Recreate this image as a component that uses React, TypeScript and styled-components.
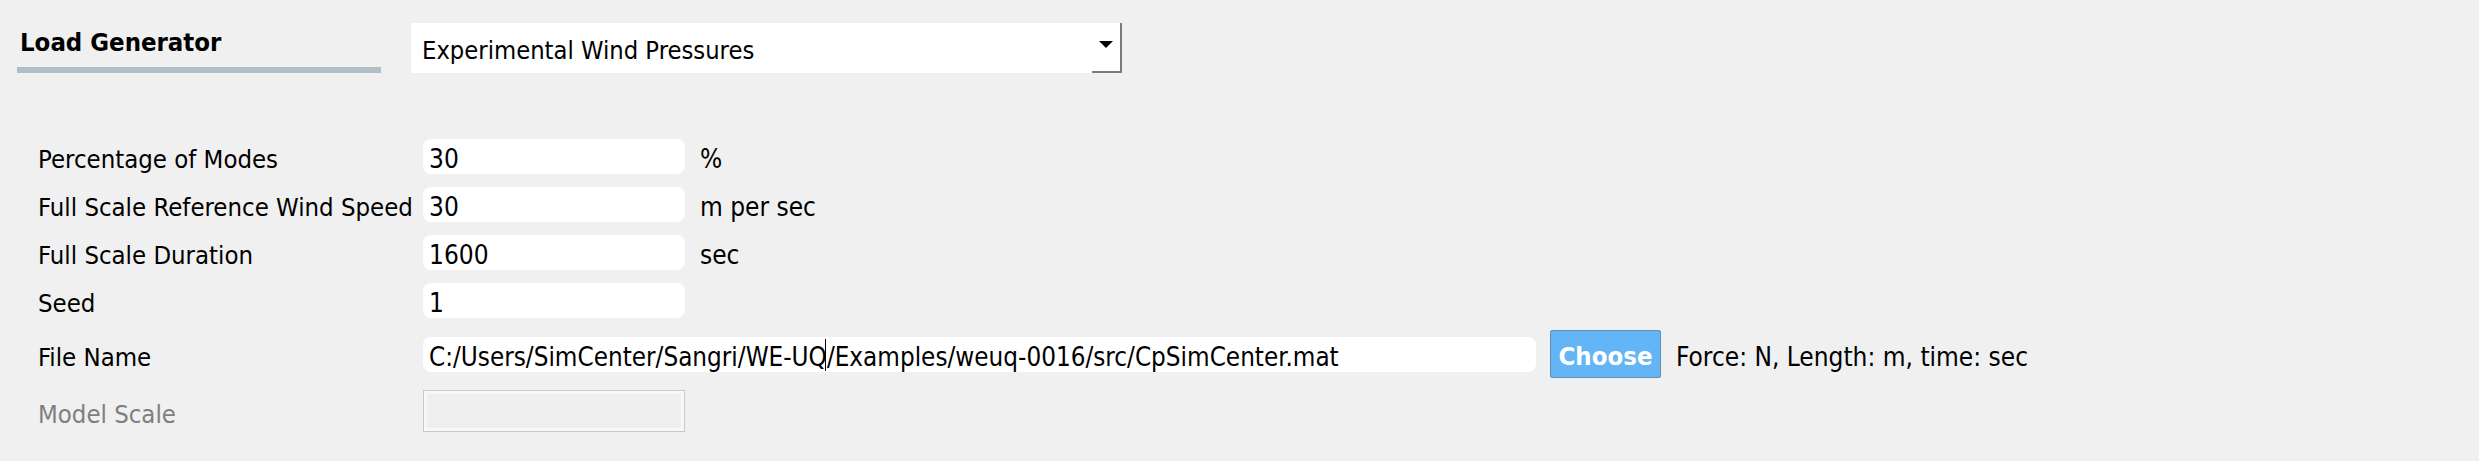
import React from "react"
import styled, { createGlobalStyle } from "styled-components"

const FONT = `"DejaVu Sans Condensed", "DejaVu Sans", sans-serif`

const GlobalStyle = createGlobalStyle`
  html, body {
    margin: 0;
    padding: 0;
    background: #f0f0f0;
  }
  body {
    font-family: ${FONT};
    font-size: 25.5px;
    color: #000;
  }
`

type Field = { label: string; value: string; unit?: string }

const fields: Field[] = [
  { label: "Percentage of Modes", value: "30", unit: "%" },
  { label: "Full Scale Reference Wind Speed", value: "30", unit: "m per sec" },
  { label: "Full Scale Duration", value: "1600", unit: "sec" },
  { label: "Seed", value: "1" },
]

export default function App() {
  return (
    <>
      <GlobalStyle />
      <Page>
        <Header>
          <TitleBlock>
            <Title>Load Generator</Title>
            <TitleBar />
          </TitleBlock>
          <Select>
            <SelectText>Experimental Wind Pressures</SelectText>
            <SelectButton>
              <Arrow />
            </SelectButton>
          </Select>
        </Header>

        <Form>
          {fields.map((f) => (
            <Row key={f.label}>
              <Label>{f.label}</Label>
              <Input>{f.value}</Input>
              {f.unit && <Unit>{f.unit}</Unit>}
            </Row>
          ))}
          <FileRow>
            <Label>File Name</Label>
            <Input $wide>
              C:/Users/SimCenter/Sangri/WE-UQ
              <Caret />
              /Examples/weuq-0016/src/CpSimCenter.mat
            </Input>
            <ChooseButton>Choose</ChooseButton>
            <Unit>Force: N, Length: m, time: sec</Unit>
          </FileRow>
          <ModelRow>
            <Label $disabled>Model Scale</Label>
            <DisabledInput />
          </ModelRow>
        </Form>
      </Page>
    </>
  )
}

const Page = styled.div`
  width: 2479px;
  height: 461px;
  box-sizing: border-box;
  padding-top: 23px;
`

const Header = styled.div`
  display: flex;
  align-items: flex-start;
  gap: 30px;
  padding-left: 17px;
`

const TitleBlock = styled.div`
  width: 364px;
  display: flex;
  flex-direction: column;
`

const Title = styled.div`
  font-weight: 700;
  font-size: 25.5px;
  line-height: 30px;
  padding: 4px 0 0 3px;
`

const TitleBar = styled.div`
  height: 6px;
  margin-top: 10px;
  background: #b0bec5;
`

const Select = styled.div`
  width: 711px;
  height: 50px;
  background: #fff;
  display: flex;
  align-items: center;
  justify-content: space-between;
`

const SelectText = styled.span`
  padding: 5px 0 0 11px;
  font-size: 25.3px;
`

const SelectButton = styled.div`
  width: 30px;
  height: 100%;
  box-sizing: border-box;
  border-right: 2px solid #7a7a7a;
  border-bottom: 2px solid #7a7a7a;
  display: flex;
  align-items: center;
  justify-content: center;
`

const Arrow = styled.div`
  width: 0;
  height: 0;
  border-left: 7px solid transparent;
  border-right: 7px solid transparent;
  border-top: 7px solid #000;
  margin-top: -6px;
`

const Form = styled.div`
  display: flex;
  flex-direction: column;
  margin-top: 59px;
  padding-left: 38px;
`

const Row = styled.div`
  display: flex;
  align-items: center;
  height: 48px;
`

const FileRow = styled(Row)`
  margin-top: 6px;
`

const ModelRow = styled(Row)`
  margin-top: 9px;
`

const Label = styled.div<{ $disabled?: boolean }>`
  width: 385px;
  flex-shrink: 0;
  padding-top: 6px;
  white-space: nowrap;
  color: ${(p) => (p.$disabled ? "#7f7f7f" : "#000")};
`

const Input = styled.div<{ $wide?: boolean }>`
  position: relative;
  width: ${(p) => (p.$wide ? "1113px" : "262px")};
  height: 35px;
  box-sizing: border-box;
  background: #fff;
  border-radius: 8px;
  padding: 6px 0 0 6px;
  font-size: ${(p) => (p.$wide ? "25.8px" : "26px")};
  display: flex;
  align-items: center;
  white-space: nowrap;
`

const Caret = styled.span`
  position: relative;
  width: 0;
  align-self: stretch;

  &::after {
    content: "";
    position: absolute;
    left: -2px;
    top: -4px;
    bottom: 1px;
    width: 1px;
    background: #000;
  }
`

const Unit = styled.span`
  margin-left: 15px;
  padding-top: 6px;
  font-size: 26px;
  white-space: nowrap;
`

const ChooseButton = styled.button`
  margin-left: 14px;
  width: 111px;
  height: 48px;
  background: #64b5f6;
  border: 1px solid #5d8fb8;
  border-radius: 2px;
  color: #fff;
  font-family: ${FONT};
  font-weight: 700;
  font-size: 25.5px;
  padding: 4px 0 0;
`

const DisabledInput = styled.div`
  width: 262px;
  height: 42px;
  box-sizing: border-box;
  border: 1px solid #c9c9c9;
  background: #efefef;
  box-shadow: inset 0 0 0 3px #f8f8f8;
`
